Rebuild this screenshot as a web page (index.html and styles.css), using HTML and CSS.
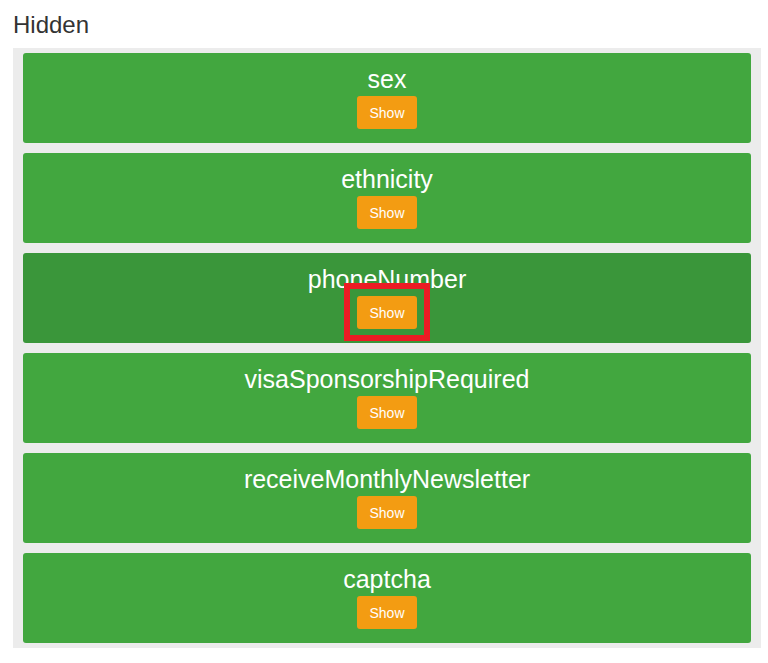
FILE: index.html
```html
<!DOCTYPE html>
<html lang="en">

<head>
    <meta charset="UTF-8">
    <meta name="viewport" content="width=device-width, initial-scale=1.0">
    <title>Hidden Fields</title>
    <link rel="stylesheet" href="styles.css">
</head>

<body>
    <div class="page">
        <h2 class="section-title">Hidden</h2>
        <div class="field-list">
            <div class="field-card">
                <div class="field-name">sex</div>
                <button class="show-btn">Show</button>
            </div>
            <div class="field-card">
                <div class="field-name">ethnicity</div>
                <button class="show-btn">Show</button>
            </div>
            <div class="field-card active">
                <div class="field-name">phoneNumber</div>
                <button class="show-btn highlighted">Show</button>
            </div>
            <div class="field-card">
                <div class="field-name">visaSponsorshipRequired</div>
                <button class="show-btn">Show</button>
            </div>
            <div class="field-card">
                <div class="field-name">receiveMonthlyNewsletter</div>
                <button class="show-btn">Show</button>
            </div>
            <div class="field-card">
                <div class="field-name">captcha</div>
                <button class="show-btn">Show</button>
            </div>
        </div>
    </div>
</body>

</html>
```

FILE: styles.css
```css
body {
    margin: 0;
    padding: 0;
    background: #ffffff;
    font-family: "Liberation Sans", Arial, sans-serif;
}

.page {
    padding-left: 13px;
    width: 748px;
}

.section-title {
    margin: 11px 0 9px 0;
    font-size: 24px;
    line-height: 28px;
    font-weight: normal;
    color: #333333;
}

.field-list {
    background-color: #ececec; /* light grey panel */
    padding: 5px 10px;
    display: flex;
    flex-direction: column;
    gap: 10px;
}

.field-card {
    background-color: #42a73f;
    border-radius: 3px;
    padding: 12px 0 14px 0;
    display: flex;
    flex-direction: column;
    align-items: center;
}

.field-card.active {
    background-color: #3a963a; /* hovered row */
}

.field-name {
    color: #ffffff;
    font-size: 25px;
    line-height: 28px;
    margin-bottom: 3px;
}

.show-btn {
    position: relative;
    width: 60px;
    height: 33px;
    padding: 0;
    border: none;
    border-radius: 3px;
    background-color: #f39c12;
    color: #ffffff;
    font-family: "Liberation Sans", Arial, sans-serif;
    font-size: 14px;
    cursor: pointer;
}

.show-btn.highlighted::after {
    content: "";
    position: absolute;
    top: -13px;
    left: -13px;
    right: -13px;
    bottom: -12px;
    border: 6px solid #ec1c24;
}
```
